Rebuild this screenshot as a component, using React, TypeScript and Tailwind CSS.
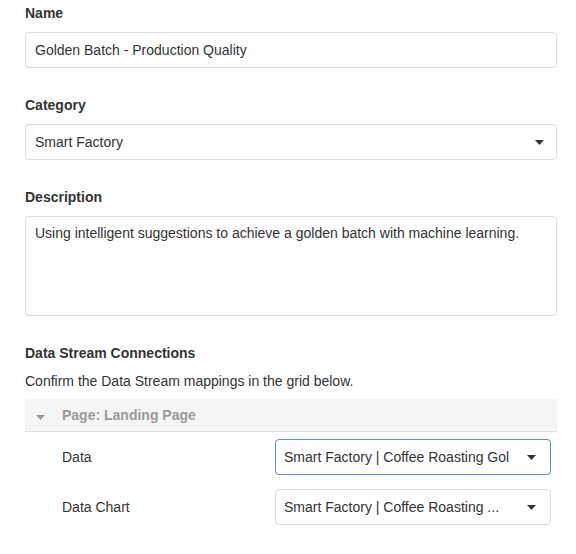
function Caret({ className = "" }: { className?: string }) {
  return (
    <svg width="9" height="5" viewBox="0 0 9 5" className={className}>
      <path d="M0 0h9L4.5 5z" fill="currentColor" />
    </svg>
  );
}

function SelectBox({
  value,
  focused,
  className = "",
}: {
  value: string;
  focused?: boolean;
  className?: string;
}) {
  return (
    <div
      className={`flex h-[36px] items-center rounded-[4px] border bg-white ${
        focused ? "border-[#5a8bd0]" : "border-[#dcdcdc]"
      } ${className}`}
    >
      <span className="min-w-0 flex-1 truncate text-[14px] text-[#333]">{value}</span>
      <Caret className="ml-2 shrink-0 text-[#333]" />
    </div>
  );
}

export default function App() {
  const mappings = [
    { label: "Data", value: "Smart Factory | Coffee Roasting Gol", focused: true },
    { label: "Data Chart", value: "Smart Factory | Coffee Roasting ...", focused: false },
  ];

  return (
    <div
      className="min-h-[554px] w-[576px] bg-white px-[25px] pt-[3px] text-[14px] leading-[20px] text-[#333]"
      style={{ fontFamily: '"Liberation Sans", Arial, sans-serif' }}
    >
      <div className="w-[532px]">
        <div className="mb-[9px] font-bold">Name</div>
        <div className="flex h-[36px] items-center rounded-[4px] border border-[#dcdcdc] pl-[9px]">
          Golden Batch - Production Quality
        </div>

        <div className="mb-[9px] mt-[27px] font-bold">Category</div>
        <SelectBox value="Smart Factory" className="pl-[9px] pr-[12px]" />

        <div className="mb-[9px] mt-[27px] font-bold">Description</div>
        <div className="h-[100px] rounded-[4px] border border-[#dcdcdc] pl-[9px] pt-[6px]">
          Using intelligent suggestions to achieve a golden batch with machine learning.
        </div>

        <div className="mt-[27px] font-bold">Data Stream Connections</div>
        <div className="mt-[8px]">Confirm the Data Stream mappings in the grid below.</div>

        <div className="mt-[8px] flex h-[33px] items-center border-b border-[#e3e3e3] bg-[#f5f5f5]">
          <Caret className="ml-[11px] mt-[4px] text-[#9a9a9a]" />
          <span className="ml-[17px] font-bold text-[#9a9a9a]">Page: Landing Page</span>
        </div>

        <div className="flex flex-col gap-[14px] pt-[7px]">
          {mappings.map((m) => (
            <div key={m.label} className="flex items-center">
              <span className="w-[250px] pl-[37px]">{m.label}</span>
              <SelectBox
                value={m.value}
                focused={m.focused}
                className="w-[276px] pl-[8px] pr-[14px]"
              />
            </div>
          ))}
        </div>
      </div>
    </div>
  );
}
